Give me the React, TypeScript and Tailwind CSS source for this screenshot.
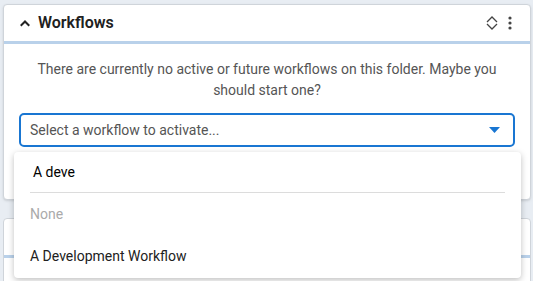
const ChevronUp = () => (
    <svg width="14" height="14" viewBox="0 0 24 24" className="text-[#222]">
        <path d="M12 7 3.5 15.5l2.4 2.4L12 11.8l6.1 6.1 2.4-2.4z" fill="currentColor" />
    </svg>
)

const UnfoldIcon = () => (
    <svg width="14" height="16" viewBox="0 0 14 16" className="text-[#444]">
        <path d="M2 7 7 2l5 5M2 9l5 5 5-5" fill="none" stroke="currentColor" strokeWidth="1.3" />
    </svg>
)

const Kebab = () => (
    <svg width="4" height="14" viewBox="0 0 4 14" className="text-[#444]">
        <circle cx="2" cy="2" r="1.6" fill="currentColor" />
        <circle cx="2" cy="7" r="1.6" fill="currentColor" />
        <circle cx="2" cy="12" r="1.6" fill="currentColor" />
    </svg>
)

const App = () => {
    return (
        <div className="relative w-[533px] h-[281px] overflow-hidden bg-[#e8edf3] font-['Roboto',sans-serif] pt-[4px] pl-[3px] pr-[2px]">
            {/* workflows card */}
            <div className="bg-white border border-[#cfd4da] rounded-[4px] h-[196px] shadow-sm">
                <div className="flex items-center h-[39px] pl-[14px] pr-[18px] border-b-[3px] border-[#b9d1ea]">
                    <ChevronUp />
                    <h2 className="ml-[6px] text-[16px] font-semibold text-[#212121]">Workflows</h2>
                    <div className="ml-auto flex items-center gap-[9px]">
                        <UnfoldIcon />
                        <Kebab />
                    </div>
                </div>
                <div className="px-[15px] pt-[15px]">
                    <p className="text-center text-[14px] leading-[21px] text-[#555] px-[12px]">
                        There are currently no active or future workflows on this folder. Maybe you should start one?
                    </p>
                    <div className="mt-[12px] h-[34px] border-2 border-[#1976d2] rounded-[5px] flex items-center pl-[9px] pr-[13px]">
                        <span className="text-[14px] text-[#555]">Select a workflow to activate...</span>
                        <svg width="11" height="6" viewBox="0 0 11 6" className="ml-auto">
                            <path d="M0 0h11L5.5 6z" fill="#1976d2" />
                        </svg>
                    </div>
                </div>
            </div>

            {/* next card, mostly hidden */}
            <div className="mt-[18px] bg-white border border-[#cfd4da] rounded-[4px] h-[80px]">
                <div className="h-[39px] border-b-[3px] border-[#b9d1ea]" />
            </div>

            {/* dropdown popup */}
            <div className="absolute left-[14px] top-[152px] w-[507px] h-[126px] bg-white rounded-[4px] shadow-[0_2px_6px_rgba(0,0,0,0.25)]">
                <div className="h-[40px] flex items-center pl-[19px] text-[14px] text-black">A deve</div>
                <div className="mx-[16px] border-t border-[#dcdcdc]" />
                <div className="h-[42px] flex items-center pl-[16px] text-[14px] text-[#aaa]">None</div>
                <div className="h-[42px] flex items-center pl-[16px] text-[14px] text-[#212121]">A Development Workflow</div>
            </div>
        </div>
    )
}

export default App
